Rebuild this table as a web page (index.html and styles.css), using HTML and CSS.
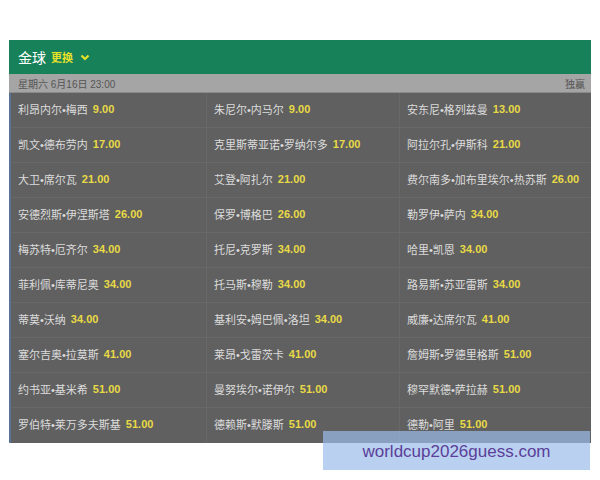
FILE: index.html
```html
<!DOCTYPE html>
<html lang="zh">
<head>
<meta charset="utf-8">
<link rel="stylesheet" href="styles.css">
</head>
<body>
<div class="panel">
  <div class="head">
    <span class="title">金球</span>
    <span class="change">更换</span>
    <svg class="chev" width="10" height="7" viewBox="0 0 10 7"><path d="M1.5 1.5 L5 5 L8.5 1.5" fill="none" stroke="#e6e02a" stroke-width="2.2"/></svg>
  </div>
  <div class="datebar"><span>星期六 6月16日 23:00</span><span>独赢</span></div>
  <div class="grid">
    <div class="cell"><span class="n">利昂内尔•梅西</span><span class="o">9.00</span></div>
    <div class="cell"><span class="n">朱尼尔•内马尔</span><span class="o">9.00</span></div>
    <div class="cell"><span class="n">安东尼•格列兹曼</span><span class="o">13.00</span></div>
    <div class="cell"><span class="n">凯文•德布劳内</span><span class="o">17.00</span></div>
    <div class="cell"><span class="n">克里斯蒂亚诺•罗纳尔多</span><span class="o">17.00</span></div>
    <div class="cell"><span class="n">阿拉尔孔•伊斯科</span><span class="o">21.00</span></div>
    <div class="cell"><span class="n">大卫•席尔瓦</span><span class="o">21.00</span></div>
    <div class="cell"><span class="n">艾登•阿扎尔</span><span class="o">21.00</span></div>
    <div class="cell"><span class="n">费尔南多•加布里埃尔•热苏斯</span><span class="o">26.00</span></div>
    <div class="cell"><span class="n">安德烈斯•伊涅斯塔</span><span class="o">26.00</span></div>
    <div class="cell"><span class="n">保罗•博格巴</span><span class="o">26.00</span></div>
    <div class="cell"><span class="n">勒罗伊•萨内</span><span class="o">34.00</span></div>
    <div class="cell"><span class="n">梅苏特•厄齐尔</span><span class="o">34.00</span></div>
    <div class="cell"><span class="n">托尼•克罗斯</span><span class="o">34.00</span></div>
    <div class="cell"><span class="n">哈里•凯恩</span><span class="o">34.00</span></div>
    <div class="cell"><span class="n">菲利佩•库蒂尼奥</span><span class="o">34.00</span></div>
    <div class="cell"><span class="n">托马斯•穆勒</span><span class="o">34.00</span></div>
    <div class="cell"><span class="n">路易斯•苏亚雷斯</span><span class="o">34.00</span></div>
    <div class="cell"><span class="n">蒂莫•沃纳</span><span class="o">34.00</span></div>
    <div class="cell"><span class="n">基利安•姆巴佩•洛坦</span><span class="o">34.00</span></div>
    <div class="cell"><span class="n">威廉•达席尔瓦</span><span class="o">41.00</span></div>
    <div class="cell"><span class="n">塞尔吉奥•拉莫斯</span><span class="o">41.00</span></div>
    <div class="cell"><span class="n">莱昂•戈雷茨卡</span><span class="o">41.00</span></div>
    <div class="cell"><span class="n">詹姆斯•罗德里格斯</span><span class="o">51.00</span></div>
    <div class="cell"><span class="n">约书亚•基米希</span><span class="o">51.00</span></div>
    <div class="cell"><span class="n">曼努埃尔•诺伊尔</span><span class="o">51.00</span></div>
    <div class="cell"><span class="n">穆罕默德•萨拉赫</span><span class="o">51.00</span></div>
    <div class="cell"><span class="n">罗伯特•莱万多夫斯基</span><span class="o">51.00</span></div>
    <div class="cell"><span class="n">德赖斯•默滕斯</span><span class="o">51.00</span></div>
    <div class="cell"><span class="n">德勒•阿里</span><span class="o">51.00</span></div>
  </div>
</div>
<div class="mark">worldcup2026guess.com</div>
</body>
</html>
```

FILE: styles.css
```css
html, body {
  margin: 0;
  padding: 0;
  background: #ffffff;
}
body {
  width: 600px;
  height: 480px;
  position: relative;
  font-family: "Liberation Sans", "Noto Sans CJK SC", sans-serif;
}
.panel {
  margin: 40px 0 0 9px;
  width: 582px;
}
.head {
  height: 34px;
  background: #178259;
  display: flex;
  align-items: center;
  padding-left: 9px;
  gap: 4px;
}
.title {
  color: #ffffff;
  font-size: 14px;
  margin-right: 1px;
}
.change {
  color: #e6e02a;
  font-size: 11px;
  font-weight: bold;
}
.chev {
  margin-left: 3px;
  margin-top: 1px;
}
.datebar {
  height: 18px;
  background: #a5a5a5;
  border-bottom: 1px solid #8a8a8a;
  display: flex;
  justify-content: space-between;
  align-items: center;
  padding: 0 6px 0 9px;
  font-size: 10px;
  color: #555555;
}
.grid {
  display: grid;
  grid-template-columns: 196px 193px 1fr;
  grid-auto-rows: 35px;
  background: #606060;
  border-left: 2px solid #5b7393;
}
.cell {
  display: flex;
  align-items: center;
  gap: 5px;
  padding: 0 0 3px 7px;
  border-bottom: 1px solid #686868;
  border-right: 1px solid #686868;
  box-sizing: border-box;
}
.cell:nth-child(3n) {
  border-right: none;
}
.cell:nth-last-child(-n+3) {
  border-bottom: none;
}
.n {
  color: #dcdcdc;
  font-size: 11px;
}
.o {
  color: #e8da46;
  font-size: 11px;
  font-weight: bold;
}
.mark {
  position: absolute;
  left: 323px;
  top: 431px;
  width: 267px;
  height: 39px;
  background: rgba(155, 188, 233, 0.7);
  color: #5b3f99;
  font-family: "Liberation Sans", sans-serif;
  font-size: 17px;
  display: flex;
  align-items: center;
  justify-content: center;
  padding-top: 2px;
  box-sizing: border-box;
}
```
